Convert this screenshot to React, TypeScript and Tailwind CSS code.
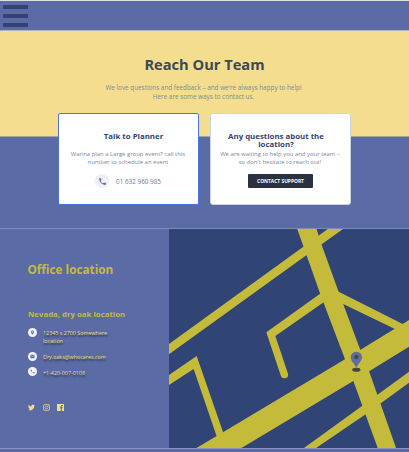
import type { ReactNode } from "react";

function Line({ className, children }: { className: string; children: ReactNode }) {
  return <div className={`whitespace-nowrap ${className}`}>{children}</div>;
}

const phonePath =
  "M6.6 10.8c1.4 2.8 3.8 5.1 6.6 6.6l2.2-2.2c.3-.3.7-.4 1-.2 1.1.4 2.300.6 3.600.6.6 0 1 .4 1 1V20c0 .6-.4 1-1 1C10.600 21 3 13.400 3 4c0-.6.4-1 1-1h3.500c.6 0 1 .4 1 1 0 1.200.2 2.400.6 3.600.1.3 0 .7-.2 1z";
const pinPath =
  "M12 2C8.100 2 5 5.100 5 9c0 5.200 7 13 7 13s7-7.800 7-13c0-3.900-3.100-7-7-7zm0 9.500a2.500 2.500 0 1 1 0-5 2.500 2.500 0 0 1 0 5z";
const mailPath =
  "M20 4H4c-1.100 0-2 .9-2 2v12c0 1.100.9 2 2 2h16c1.100 0 2-.9 2-2V6c0-1.100-.9-2-2-2zm0 4l-8 5-8-5V6l8 5 8-5z";

function Badge({ path }: { path: string }) {
  return (
    <span className="flex size-[9px] shrink-0 items-center justify-center rounded-full bg-[#f3f4fb]">
      <svg viewBox="0 0 24 24" className="size-[5px]" fill="#5a6ba5">
        <path d={path} />
      </svg>
    </span>
  );
}

function RoadMap() {
  return (
    <svg viewBox="12 12 720 660" className="block h-[220px] w-[240px] bg-[#304476]" preserveAspectRatio="none">
      <g fill="#c4bb3b">
        <polygon points="396,10 454,10 470,60 522,203 586,375 612,438 695,674 640,674 565,468 540,403 465,205" />
        <polygon points="86,674 155,633 540,403 732,285 732,365 565,468 221,674" />
        <polygon points="12,357 415,65 491,10 537,10 425,90 12,388" />
        <path d="M480 196 L304 322 L347 451 A11 11 0 0 0 369 446 L331 333 L490 222Z" />
        <polygon points="515,197 713,297 732,330 690,312 530,235" />
        <polygon points="12,450 95,393 174,621 180,640 157,640 86,432 12,480" />
        <polygon points="410,674 591,543 732,440 732,473 602,568 446,674" />
      </g>
      <ellipse cx="574" cy="434" rx="12.500" ry="6" fill="#494638" />
      <path d="M574 430 C571 418 557 409 557 397 A17 17 0 0 1 591 397 C591 409 577 418 574 430Z" fill="#5b6ca6" />
      <circle cx="574" cy="396" r="6.500" fill="#494638" />
    </svg>
  );
}

export default function App() {
  return (
    <div className="flex h-[452px] w-[409px] flex-col overflow-hidden bg-[#5a6ba5] font-['Open_Sans',sans-serif]">
      <header className="h-[31px] shrink-0 border-t border-b border-t-[#dfe1e2] border-b-[#aeb3c6] pt-[4px] pl-[3px]">
        <div className="flex w-[25px] flex-col gap-[5px]">
          <div className="h-[4px] bg-[#304476]" />
          <div className="h-[4px] bg-[#304476]" />
          <div className="h-[4px] bg-[#304476]" />
        </div>
      </header>

      <section className="flex h-[197px] shrink-0 flex-col bg-[linear-gradient(#f4dd8f_105px,#5a6ba5_106px)] text-center">
        <h1 className="mt-[23px] h-[20px] text-[14.650px] leading-[20px] font-bold text-[#3c4858]">Reach Our Team</h1>
        <div className="mt-[9px] -ml-[2px] h-[18px] text-[6.350px] leading-[9px] text-[#7d8b9b]">
          <Line className="">We love questions and feedback – and we're always happy to help!</Line>
          <Line className="">Here are some ways to contact us.</Line>
        </div>
        <div className="mt-[12px] ml-[58px] flex gap-[11px]">
          <article className="flex h-[92px] w-[141px] flex-col items-center rounded-[2px] border border-[#4b73e0] bg-white pt-[17px]">
            <Line className="ml-[10px] h-[10px] text-[7.850px] leading-[10px] font-bold text-[#304476]">Talk to Planner</Line>
            <div className="mt-[10px] -ml-[1px] text-[5.930px] leading-[7.500px] text-[#7888a3]">
              <Line className="">Wanna plan a Large group event? call this</Line>
              <Line className="">number to schedule an event</Line>
            </div>
            <div className="mt-[8px] -ml-[1px] flex items-center gap-[7px]">
              <span className="flex size-[14px] items-center justify-center rounded-full bg-[#eff0f5]">
                <svg viewBox="0 0 24 24" className="size-[9px]" fill="#5a6ba5">
                  <path d={phonePath} />
                </svg>
              </span>
              <Line className="text-[6.350px] leading-[9px] text-[#6d7e9c]">01 632 960 985</Line>
            </div>
          </article>
          <article className="flex h-[92px] w-[141px] flex-col items-center rounded-[3px] border border-[#cdd4df] bg-white pt-[18px]">
            <div className="-ml-[9px] text-[7.850px] leading-[8px] font-bold text-[#304476]">
              <Line className="">Any questions about the</Line>
              <Line className="">location?</Line>
            </div>
            <div className="mt-[3px] -ml-[1px] text-[5.930px] leading-[7.500px] text-[#7888a3]">
              <Line className="">We are waiting to help you and your team –</Line>
              <Line className="">so don't hesitate to reach out!</Line>
            </div>
            <button className="mt-[8px] h-[14px] w-[65px] rounded-[1px] bg-[#2b323f] text-[4.900px] leading-[14px] font-bold whitespace-nowrap text-white">
              CONTACT SUPPORT
            </button>
          </article>
        </div>
      </section>

      <section className="flex h-[221px] shrink-0 border-t border-[#7d8bb9]">
        <div className="w-[169px] shrink-0 pl-[28px]">
          <Line className="mt-[30px] -ml-[0.500px] h-[20px] text-[11.750px] leading-[20px] font-bold text-[#c4bb3b]">Office location</Line>
          <Line className="mt-[30px] h-[10px] text-[7.820px] leading-[10px] font-bold text-[#c4bb3b]">Nevada, dry oak location</Line>
          <div className="mt-[9px] text-[5.370px] leading-[8px] font-medium text-[#f4dd8f] [text-shadow:0.5px_1.5px_1.5px_rgba(20,25,50,0.75)]">
            <div className="flex h-[24px] gap-[6px]">
              <Badge path={pinPath} />
              <div className="pt-[1px]">
                <Line className="">12345 s 2700 Somewhere</Line>
                <Line className="">location</Line>
              </div>
            </div>
            <div className="flex h-[15px] gap-[6px]">
              <Badge path={mailPath} />
              <Line className="pt-[1px]">Dry.oaks@whocares.com</Line>
            </div>
            <div className="flex h-[9px] gap-[6px]">
              <Badge path={phonePath} />
              <Line className="pt-[2px]">+1-420-007-0108</Line>
            </div>
          </div>
          <div className="mt-[28px] flex items-center gap-[7.500px] text-[#f4dd8f]">
            <svg viewBox="0 0 24 24" className="size-[7px]" fill="currentColor">
              <path d="M24 4.600a10 10 0 0 1-2.800.8 4.900 4.900 0 0 0 2.100-2.700 10 10 0 0 1-3.100 1.200 4.900 4.900 0 0 0-8.400 4.500A14 14 0 0 1 1.700 3.200a4.900 4.900 0 0 0 1.500 6.500 5 5 0 0 1-2.200-.6 4.900 4.900 0 0 0 3.900 4.900 5 5 0 0 1-2.200.1 4.900 4.900 0 0 0 4.600 3.400A10 10 0 0 1 0 19.500 14 14 0 0 0 21.500 7.100 10 10 0 0 0 24 4.600z" />
            </svg>
            <svg viewBox="0 0 24 24" className="size-[7px]" fill="none" stroke="currentColor" strokeWidth="2.500">
              <rect x="1.500" y="1.500" width="21" height="21" rx="6" />
              <circle cx="12" cy="12" r="5" />
              <circle cx="18" cy="6" r="0.500" />
            </svg>
            <svg viewBox="0 0 24 24" className="size-[7px]" fill="currentColor">
              <path d="M22.700 0H1.300C.6 0 0 .6 0 1.300v21.400c0 .7.6 1.300 1.300 1.300h11.500v-9.300H9.700v-3.600h3.100V8.400c0-3.100 1.900-4.800 4.700-4.800 1.300 0 2.500.1 2.800.2V7h-1.900c-1.500 0-1.800.7-1.800 1.800v2.300h3.600l-.5 3.600h-3.100V24h6.100c.7 0 1.300-.6 1.300-1.300V1.300C24 .6 23.400 0 22.700 0z" />
            </svg>
          </div>
        </div>
        <RoadMap />
      </section>
      <footer className="-mt-[1px] h-[4px] shrink-0 border-t border-[#8c97bd]" />
    </div>
  );
}
